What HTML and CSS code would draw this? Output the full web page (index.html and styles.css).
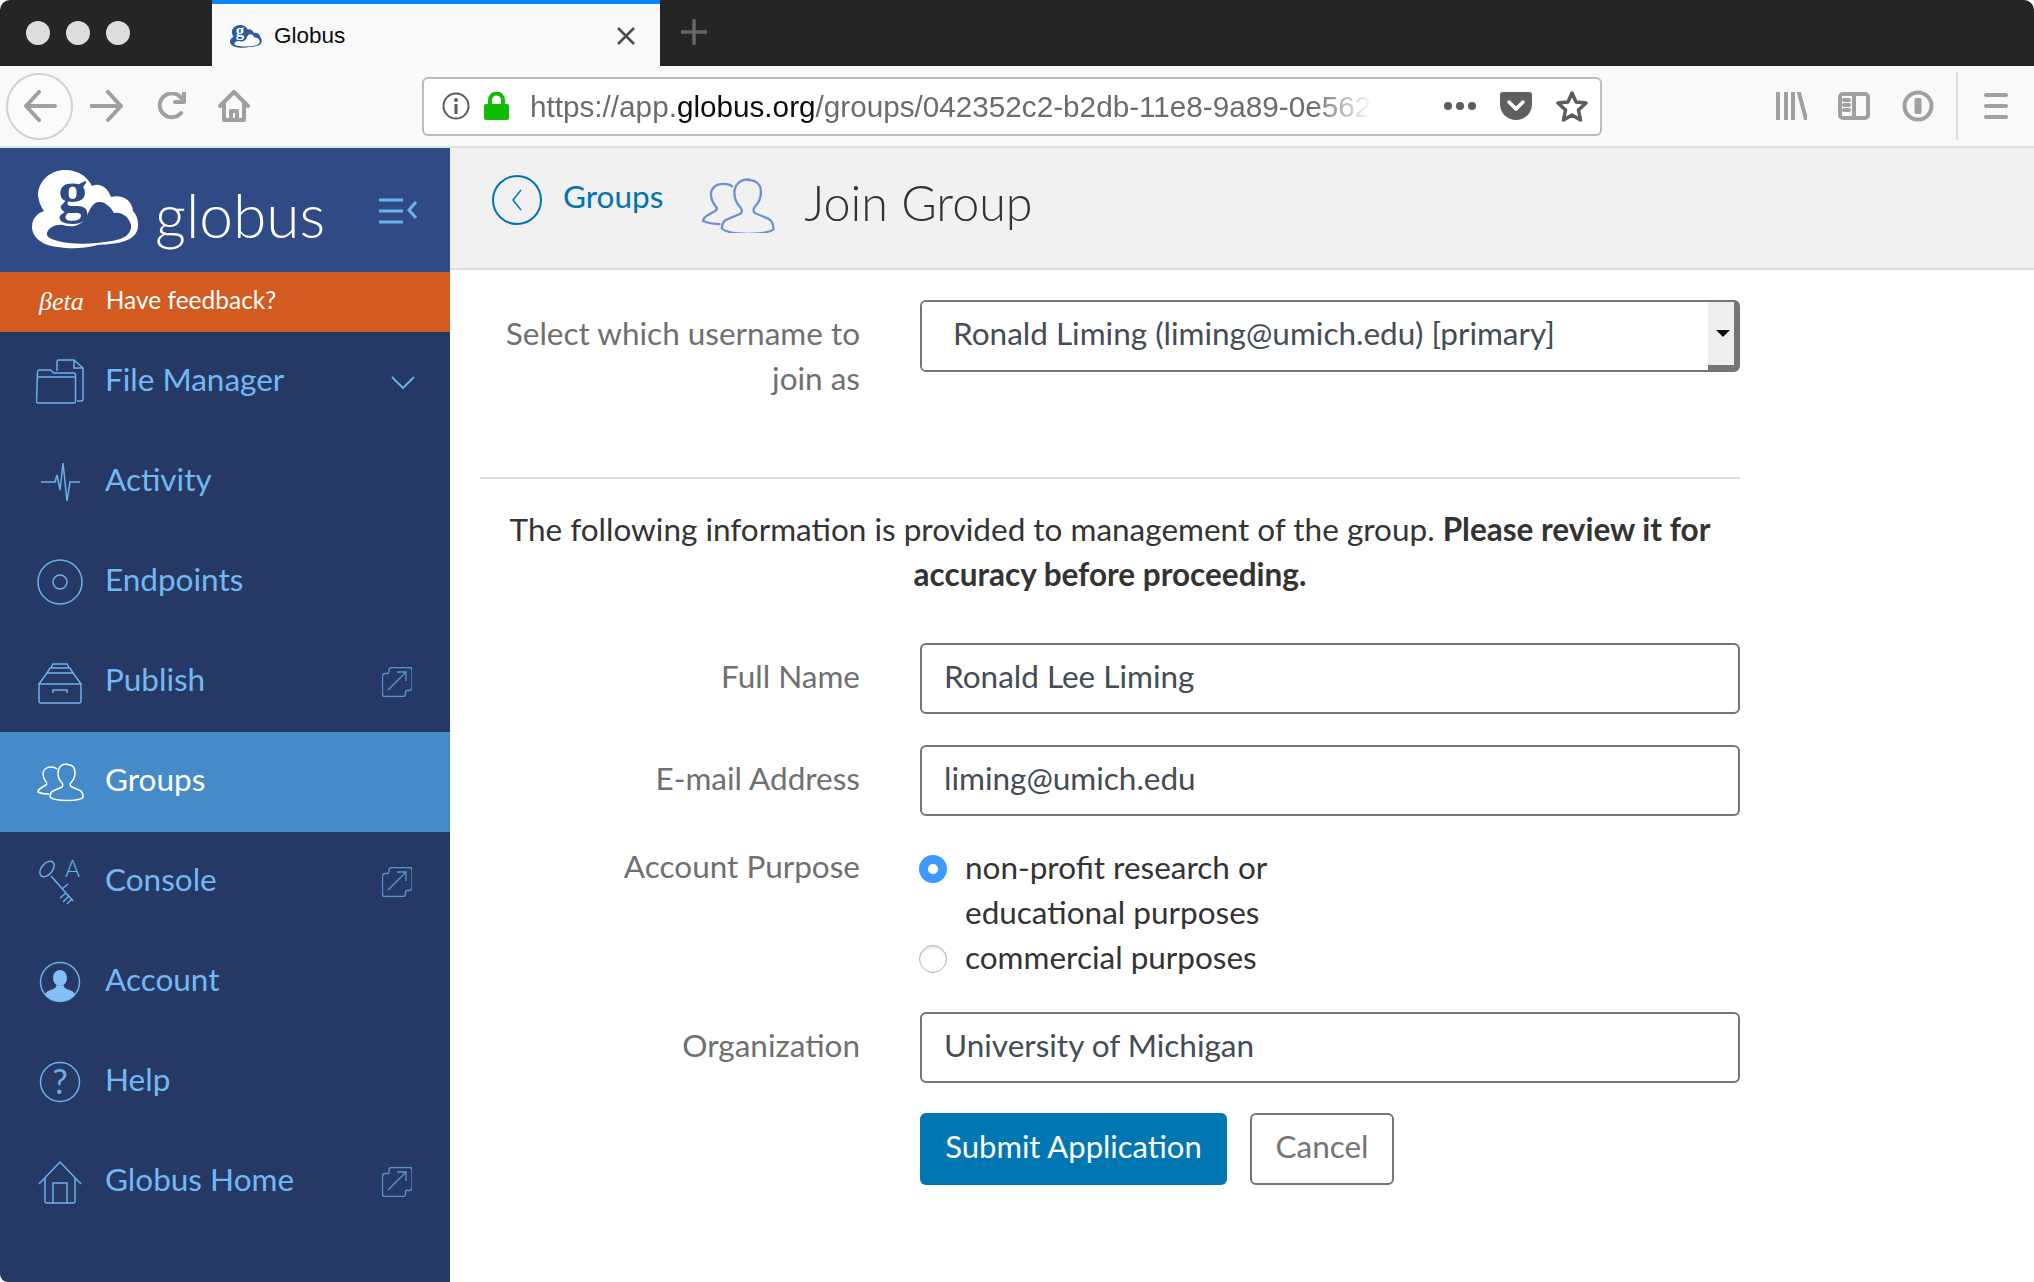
FILE: index.html
```html
<!DOCTYPE html>
<html lang="en">
<head>
    <meta charset="UTF-8">
    <title>Globus</title>
    <link rel="stylesheet" href="styles.css">
</head>
<body>
    <!-- shared icons -->
    <svg class="defs" width="0" height="0">
        <symbol id="i-folder" viewBox="0 0 48 48">
            <path d="M21 13V4a2 2 0 0 1 2-2h15l9 8v31a2 2 0 0 1-2 2h-4"/>
            <path d="M38 2v8h9"/>
            <path d="M1.5 14a2 2 0 0 1 2-2h11l3 3h20a2 2 0 0 1 2 2v26a2 2 0 0 1-2 2h-35a2 2 0 0 1-2-2z"/>
            <path d="M1.5 19h38"/>
        </symbol>
        <symbol id="i-activity" viewBox="0 0 48 48">
            <path d="M5 24h14l2-7 3 15 3-27 4 38 3-19h10"/>
        </symbol>
        <symbol id="i-endpoints" viewBox="0 0 48 48">
            <circle cx="24" cy="24" r="22"/>
            <circle cx="24" cy="24" r="7"/>
        </symbol>
        <symbol id="i-publish" viewBox="0 0 48 48">
            <path d="M3 26h42v17a2 2 0 0 1-2 2H5a2 2 0 0 1-2-2z"/>
            <path d="M3 26l8-11h26l8 11"/>
            <path d="M11 15l3-5h20l3 5"/>
            <path d="M15 10l2-4h14l2 4"/>
            <path d="M17 35v-3h14v3"/>
        </symbol>
        <symbol id="i-groups" viewBox="0 0 48 48">
            <path d="M31 6c-6 0-9 4-9 9 0 4 2 8 4 10 1 1 1 3 0 4l-9 4c-2 1-3 3-3 6 3 3 10 3.500 17 3.500s13-.5 16-3c0-3-1-6-3-7l-9-4c-1-1-1-3 0-4 2-2 4-6 4-10 0-5-3-8-8-8z"/>
            <path d="M21 11c-1.500-1.500-3.500-2-6-2-5 0-8 3-8 7 0 3 1.500 6 3 8 1 1 1 2 0 3l-5 3c-2 1-3 2-3 4 3 1.500 7 2 11 2"/>
        </symbol>
        <symbol id="i-account" viewBox="0 0 48 48">
            <circle cx="24" cy="24" r="19.500"/>
            <ellipse class="solid" cx="24" cy="20" rx="7" ry="8"/>
            <path class="solid" d="M24 43.500a19.500 19.500 0 0 1-15-7c1-3 4-4 7-5 3-1 4-2 4-4h8c0 2 1 3 4 4 3 1 6 2 7 5a19.500 19.500 0 0 1-15 7z"/>
        </symbol>
        <symbol id="i-home" viewBox="0 0 48 48">
            <path d="M3 26L24 4l21 22"/>
            <path d="M9 20v23a2 2 0 0 0 2 2h26a2 2 0 0 0 2-2V20"/>
            <path d="M17 45V25h14v20"/>
        </symbol>
        <symbol id="i-external" viewBox="0 0 30 30">
            <path d="M7 6V3a2.500 2.500 0 0 1 2.500-2.500h18A2.500 2.500 0 0 1 30 3v18a2.500 2.500 0 0 1-2.500 2.500H24"/>
            <path d="M.5 9A2.500 2.500 0 0 1 3 6.500h4M.5 9v18.500A2 2 0 0 0 2.500 29.500H21a2.500 2.500 0 0 0 2.500-2.500v-3.500"/>
            <path d="M6 23L24 5M15 5h9v9"/>
        </symbol>
    </svg>

    <div class="window">
        <div class="tabbar">
            <div class="lights">
                <span class="light"></span>
                <span class="light"></span>
                <span class="light"></span>
            </div>
            <div class="tab">
                <svg class="favicon" width="32" height="23" viewBox="0 0 107 79" preserveAspectRatio="none">
                    <path fill="#2c5a9f" d="M33 0C48 0 56 8 60 16c8-4 16 2 19 11 11-3 21 3 22 14 5 5 7 15 3 22-6 10-24 11-38 12-16 4-28 4-40 2C12 76 0 68 0 57c0-9 6-14 12-16-4-5-6-13-6-17C7 10 19 0 33 0z"/>
                    <path fill="#fff" d="M15 63c2-6 9-9 16-8 9 3 19 1 24-9 3-8 7-15 13-14 5 0 10 4 14 11 8-1 15 4 17 12 1 9-7 14-19 16-18 3-40 4-54 0-7-2-12-4-11-8z"/>
                    <text class="favicon-g" x="33" y="38">g</text>
                </svg>
                <span class="tab-title">Globus</span>
                <svg class="tab-close" width="20" height="20" viewBox="0 0 20 20"><path d="M2 2l16 16M18 2L2 18"/></svg>
            </div>
            <svg class="new-tab" width="26" height="26" viewBox="0 0 26 26"><path d="M13 0v26M0 13h26"/></svg>
        </div>

        <div class="toolbar">
            <div class="back-btn">
                <svg class="tool-icon" width="34" height="32" viewBox="0 0 34 32"><path d="M3 16h29M16 2L3 16l13 14"/></svg>
            </div>
            <svg class="tool-icon forward" width="33" height="32" viewBox="0 0 33 32"><path d="M1 16h29M18 2l13 14-13 14"/></svg>
            <svg class="tool-icon reload" width="31" height="28" viewBox="0 0 31 28"><path d="M25 21a12 12 0 1 1 1-14M28 1v9h-9"/></svg>
            <svg class="tool-icon home" width="32" height="32" viewBox="0 0 32 32"><path d="M2 16L16 2l14 14M6 14v16h20V14M13 30v-9h6v9"/></svg>

            <div class="urlbar">
                <svg class="url-info" width="28" height="28" viewBox="0 0 28 28">
                    <circle cx="14" cy="14" r="12.500"/>
                    <circle class="dot" cx="14" cy="8" r="2"/>
                    <path d="M14 12v10"/>
                </svg>
                <svg class="url-lock" width="25" height="28" viewBox="0 0 25 28">
                    <path d="M6 13V8a6.500 6.500 0 0 1 13 0v5" fill="none" stroke="#12bc00" stroke-width="4"/>
                    <rect y="12" width="25" height="16" rx="2" fill="#12bc00"/>
                </svg>
                <div class="url-text">https://app.<b>globus.org</b>/groups/042352c2-b2db-11e8-9a89-0e562</div>
                <svg class="url-dots" width="32" height="8" viewBox="0 0 32 8">
                    <circle cx="4" cy="4" r="4"/><circle cx="16" cy="4" r="4"/><circle cx="28" cy="4" r="4"/>
                </svg>
                <svg class="url-pocket" width="32" height="28" viewBox="0 0 32 28">
                    <path class="pocket-bg" d="M3 0h26a3 3 0 0 1 3 3v9c0 9-7 16-16 16S0 21 0 12V3a3 3 0 0 1 3-3z"/>
                    <path class="pocket-v" d="M9 10l7 7 7-7"/>
                </svg>
                <svg class="url-star" width="32" height="32" viewBox="0 0 32 32">
                    <path d="M16 3l4 9 10 1-7.500 7 2 10-8.500-5-8.500 5 2-10L2 13l10-1z"/>
                </svg>
            </div>

            <svg class="tool-icon library" width="31" height="28" viewBox="0 0 31 28"><path d="M2 1v26M10 1v26M17 1v26M23 1l7 26"/></svg>
            <svg class="tool-icon side" width="32" height="28" viewBox="0 0 32 28">
                <rect x="2" y="2" width="28" height="24" rx="3"/>
                <path d="M16 2v24M6 8h5M6 13h5M6 18h5"/>
            </svg>
            <svg class="tool-icon onepass" width="32" height="32" viewBox="0 0 32 32">
                <circle cx="16" cy="16" r="13.500"/>
                <rect class="onepass-key" x="12.500" y="8" width="7" height="16" rx="1.500"/>
            </svg>
            <span class="tool-sep"></span>
            <div class="hamburger"><span></span><span></span><span></span></div>
        </div>

        <div class="app">
            <aside class="sidebar">
                <div class="brand">
                    <svg class="brand-cloud" width="107" height="79" viewBox="0 0 107 79">
                        <path fill="#fff" d="M33 0C48 0 56 8 60 16c8-4 16 2 19 11 11-3 21 3 22 14 5 5 7 15 3 22-6 10-24 11-38 12-16 4-28 4-40 2C12 76 0 68 0 57c0-9 6-14 12-16-4-5-6-13-6-17C7 10 19 0 33 0z"/>
                        <path fill="#2f4a85" d="M15 63c2-6 9-9 16-8 9 3 19 1 24-9 3-8 7-15 13-14 5 0 10 4 14 11 8-1 15 4 17 12 1 9-7 14-19 16-18 3-40 4-54 0-7-2-12-4-11-8z"/>
                        <text class="brand-g" x="41" y="41">g</text>
                    </svg>
                    <span class="brand-name">globus</span>
                    <svg class="brand-toggle" width="38" height="26" viewBox="0 0 38 26">
                        <path d="M0 2h24M0 13h24M0 24h24M37 4l-7 8 7 8"/>
                    </svg>
                </div>
                <div class="beta">
                    <span class="beta-mark">βeta</span>
                    <span class="beta-text">Have feedback?</span>
                </div>
                <nav class="nav">
                    <a class="nav-item">
                        <svg class="nav-icon"><use href="#i-folder"/></svg>
                        <span class="nav-label">File Manager</span>
                        <svg class="nav-chevron" width="24" height="13" viewBox="0 0 24 13"><path d="M1 1l11 11L23 1"/></svg>
                    </a>
                    <a class="nav-item">
                        <svg class="nav-icon"><use href="#i-activity"/></svg>
                        <span class="nav-label">Activity</span>
                    </a>
                    <a class="nav-item">
                        <svg class="nav-icon"><use href="#i-endpoints"/></svg>
                        <span class="nav-label">Endpoints</span>
                    </a>
                    <a class="nav-item">
                        <svg class="nav-icon"><use href="#i-publish"/></svg>
                        <span class="nav-label">Publish</span>
                        <svg class="nav-ext"><use href="#i-external"/></svg>
                    </a>
                    <a class="nav-item active">
                        <svg class="nav-icon"><use href="#i-groups"/></svg>
                        <span class="nav-label">Groups</span>
                    </a>
                    <a class="nav-item">
                        <svg class="nav-icon" viewBox="0 0 48 48">
                            <ellipse cx="11" cy="11" rx="5.500" ry="9" transform="rotate(40 11 11)"/>
                            <path d="M15 18l22 25"/>
                            <path d="M30 35l-6 5M33 38l-6 6M36 41l-5 5M26 31l6-5"/>
                            <text class="icon-text" x="29" y="19">A</text>
                        </svg>
                        <span class="nav-label">Console</span>
                        <svg class="nav-ext"><use href="#i-external"/></svg>
                    </a>
                    <a class="nav-item">
                        <svg class="nav-icon"><use href="#i-account"/></svg>
                        <span class="nav-label">Account</span>
                    </a>
                    <a class="nav-item">
                        <svg class="nav-icon" viewBox="0 0 48 48">
                            <circle cx="24" cy="24" r="19.500"/>
                            <text class="icon-text icon-q" x="24" y="36">?</text>
                        </svg>
                        <span class="nav-label">Help</span>
                    </a>
                    <a class="nav-item">
                        <svg class="nav-icon"><use href="#i-home"/></svg>
                        <span class="nav-label">Globus Home</span>
                        <svg class="nav-ext"><use href="#i-external"/></svg>
                    </a>
                </nav>
            </aside>

            <main class="main">
                <header class="page-head">
                    <a class="back-link">
                        <span class="back-circle">
                            <svg width="12" height="24" viewBox="0 0 12 24"><path d="M10 2L2 12l8 10"/></svg>
                        </span>
                        <span class="back-text">Groups</span>
                    </a>
                    <svg class="head-icon" width="75" height="55" viewBox="0 5 48 37" preserveAspectRatio="none"><use href="#i-groups" width="48" height="48"/></svg>
                    <h1 class="page-title">Join Group</h1>
                </header>

                <form class="form">
                    <div class="row row-select">
                        <label class="row-label">Select which username to join as</label>
                        <div class="select-wrap">
                            <select class="select">
                                <option>Ronald Liming (liming@umich.edu) [primary]</option>
                            </select>
                            <span class="select-arrow"></span>
                        </div>
                    </div>

                    <hr class="divider">

                    <p class="notice">The following information is provided to management of the group. <b>Please review it for accuracy before proceeding.</b></p>

                    <div class="row">
                        <label class="row-label">Full Name</label>
                        <input class="input" type="text" value="Ronald Lee Liming">
                    </div>
                    <div class="row">
                        <label class="row-label">E-mail Address</label>
                        <input class="input" type="text" value="liming@umich.edu">
                    </div>
                    <div class="row row-tight">
                        <label class="row-label row-label-flat">Account Purpose</label>
                        <div class="radios">
                            <label class="radio-line">
                                <input class="radio" type="radio" name="purpose" checked>
                                <span class="radio-text">non-profit research or<br>educational purposes</span>
                            </label>
                            <label class="radio-line">
                                <input class="radio" type="radio" name="purpose">
                                <span class="radio-text">commercial purposes</span>
                            </label>
                        </div>
                    </div>
                    <div class="row row-tight">
                        <label class="row-label">Organization</label>
                        <input class="input" type="text" value="University of Michigan">
                    </div>
                    <div class="row">
                        <span class="row-label"></span>
                        <div class="actions">
                            <button class="btn btn-primary" type="button">Submit Application</button>
                            <button class="btn btn-plain" type="button">Cancel</button>
                        </div>
                    </div>
                </form>
            </main>
        </div>
    </div>
</body>
</html>
```
FILE: styles.css
```css
/* Base */
html, body {
    margin: 0;
    padding: 0;
    height: 100%;
    background-color: #fff;
}
body {
    font-family: Lato, "Open Sans", sans-serif;
    font-size: 31.500px;
    color: #333;
    overflow: hidden;
}
.defs {
    position: absolute;
}
svg {
    display: block;
    flex: none;
}
.window {
    height: 1282px;
    display: flex;
    flex-direction: column;
}

/* Browser tabs */
.tabbar {
    height: 66px;
    display: flex;
    background-color: #252525;
    border-radius: 10px 10px 0 0;
}
.lights {
    width: 210px;
    padding-left: 26px;
    box-sizing: border-box;
    display: flex;
    align-items: center;
    gap: 16px;
}
.light {
    width: 24px;
    height: 24px;
    border-radius: 50%;
    background-color: #dedede;
}
.tab {
    width: 448px;
    margin-left: 2px;
    box-sizing: border-box;
    display: flex;
    align-items: center;
    padding: 2px 24px 0 18px;
    background-color: #f9f9f9;
    border-top: 4px solid #0a84ff;
    font-family: "Liberation Sans", sans-serif;
    font-size: 22.500px;
    color: #0c0c0d;
}
.favicon-g {
    font-family: "Liberation Serif", serif;
    font-weight: bold;
    font-size: 56px;
    fill: #fff;
    text-anchor: middle;
}
.tab-title {
    margin-left: 12px;
    flex: 1;
}
.tab-close path {
    fill: none;
    stroke: #4a4a4f;
    stroke-width: 2.500;
}
.new-tab {
    margin: 19px 0 0 21px;
}
.new-tab path {
    fill: none;
    stroke: #666;
    stroke-width: 3.500;
}

/* Browser toolbar */
.toolbar {
    height: 80px;
    display: flex;
    align-items: center;
    background-color: #f9f9f9;
    border-bottom: 2px solid #e0e0e0;
    padding-left: 6px;
}
.tool-icon {
    fill: none;
    stroke: #a0a0a0;
    stroke-width: 4;
    stroke-linecap: round;
    stroke-linejoin: round;
}
.back-btn {
    width: 67px;
    height: 67px;
    box-sizing: border-box;
    display: flex;
    align-items: center;
    justify-content: center;
    border: 2px solid #d2d2d2;
    border-radius: 50%;
    background-color: #fbfbfb;
}
.forward { margin-left: 17px; }
.reload { margin-left: 33px; }
.home { margin-left: 31px; }
.urlbar {
    width: 1180px;
    height: 59px;
    margin-left: 172px;
    box-sizing: border-box;
    display: flex;
    align-items: center;
    padding: 0 12px 0 18px;
    background-color: #fff;
    border: 2px solid #bbb;
    border-radius: 6px;
}
.url-info {
    fill: none;
    stroke: #5c5c5c;
    stroke-width: 2;
}
.url-info .dot {
    fill: #5c5c5c;
    stroke: none;
}
.url-info path {
    stroke-width: 3;
}
.url-lock {
    margin-left: 14px;
}
.url-text {
    width: 843px;
    margin-left: 21px;
    padding-top: 2px;
    overflow: hidden;
    white-space: nowrap;
    font-family: "Liberation Sans", sans-serif;
    font-size: 29.700px;
    color: #6c6c6c;
    -webkit-mask-image: linear-gradient(to right, #000 93%, transparent);
    mask-image: linear-gradient(to right, #000 93%, transparent);
}
.url-text b {
    font-weight: normal;
    color: #0c0c0d;
}
.url-dots {
    margin-left: 72px;
    fill: #5c5c5c;
}
.url-pocket {
    margin-left: 24px;
}
.pocket-bg {
    fill: #5f5f5f;
}
.pocket-v {
    fill: none;
    stroke: #fff;
    stroke-width: 3.500;
    stroke-linecap: round;
    stroke-linejoin: round;
}
.url-star {
    margin-left: 24px;
    fill: none;
    stroke: #5c5c5c;
    stroke-width: 3.500;
    stroke-linejoin: round;
}
.library { margin-left: 174px; }
.side { margin-left: 31px; }
.onepass { margin-left: 32px; }
.onepass-key {
    fill: #a0a0a0;
    stroke: none;
}
.tool-sep {
    width: 2px;
    height: 68px;
    margin-left: 22px;
    background-color: #dcdcdc;
}
.hamburger {
    margin-left: 26px;
    width: 24px;
    display: flex;
    flex-direction: column;
    gap: 7px;
}
.hamburger span {
    height: 4px;
    border-radius: 2px;
    background-color: #a0a0a0;
}

/* App layout */
.app {
    flex: 1;
    display: flex;
    min-height: 0;
}
.sidebar {
    width: 450px;
    flex: none;
    display: flex;
    flex-direction: column;
    background-color: #263965;
    border-bottom-left-radius: 8px;
}
.brand {
    height: 124px;
    display: flex;
    align-items: flex-start;
    background-color: #2f4a85;
}
.brand-cloud {
    margin: 22px 0 0 32px;
}
.brand-name {
    margin: 32px 0 0 16px;
    font-weight: 300;
    font-size: 60.500px;
    line-height: 70px;
    color: #fff;
}
.brand-g {
    font-family: "Liberation Serif", serif;
    font-weight: bold;
    font-size: 60px;
    fill: #2f4a85;
    text-anchor: middle;
}
.brand-toggle {
    margin: 50px 0 0 54px;
    fill: none;
    stroke: #6bb3ee;
    stroke-width: 3;
}
.beta {
    height: 60px;
    display: flex;
    align-items: center;
    gap: 22px;
    padding-left: 39px;
    background-color: #d35b20;
    color: #fff;
    font-size: 24.500px;
}
.beta-mark {
    font-family: "Liberation Serif", serif;
    font-style: italic;
    font-size: 26px;
}
.beta-text {
    margin-top: -6px;
}
.nav-item {
    height: 100px;
    display: flex;
    align-items: center;
    padding: 0 38px 0 36px;
    color: #72b8f2;
}
.nav-icon {
    width: 48px;
    height: 48px;
    fill: none;
    stroke: #6cb0ea;
    stroke-width: 1.500;
}
.solid {
    fill: #84c0f5;
    stroke: none;
}
.icon-text {
    font-family: Lato, sans-serif;
    font-weight: 300;
    font-size: 23px;
    fill: #6cb0ea;
    stroke: none;
}
.icon-q {
    font-size: 34px;
    font-weight: 400;
    text-anchor: middle;
}
.nav-label {
    margin: -7px 0 0 21px;
    flex: 1;
}
.nav-chevron {
    margin-right: -3px;
    fill: none;
    stroke: #6cb0ea;
    stroke-width: 2;
}
.nav-ext {
    width: 30px;
    height: 30px;
    fill: none;
    stroke: #5d94cc;
    stroke-width: 1.300;
}
.nav-item.active {
    background-color: #468bc9;
    color: #fff;
}
.nav-item.active .nav-icon {
    stroke: #fff;
}

/* Page header */
.main {
    flex: 1;
    min-width: 0;
}
.page-head {
    height: 120px;
    display: flex;
    align-items: flex-start;
    padding-left: 42px;
    background-color: #f1f1f1;
    border-bottom: 2px solid #ddd;
}
.back-link {
    display: flex;
    align-items: center;
    gap: 21px;
    margin-top: 27px;
    color: #0073b0;
    line-height: 44px;
}
.back-text {
    margin-top: -8px;
}
.back-circle {
    width: 50px;
    height: 50px;
    box-sizing: border-box;
    display: flex;
    align-items: center;
    justify-content: center;
    border: 2px solid #0073b0;
    border-radius: 50%;
}
.back-circle svg {
    fill: none;
    stroke: #0073b0;
    stroke-width: 1.500;
}
.head-icon {
    margin: 30px 0 0 37px;
    fill: none;
    stroke: #6f8fd0;
    stroke-width: 1.500;
}
.page-title {
    margin: 26px 0 0 29px;
    font-weight: 300;
    font-size: 48.500px;
    line-height: 56px;
    color: #333;
}

/* Form */
.form {
    width: 1260px;
    margin: 30px 0 0 30px;
    line-height: 45px;
}
.row {
    display: flex;
    margin-bottom: 31px;
}
.row-tight {
    margin-bottom: 30px;
}
.row-select {
    margin-bottom: 0;
    padding-bottom: 76px;
}
.row-label {
    width: 380px;
    flex: none;
    margin-right: 60px;
    padding-top: 11px;
    text-align: right;
    color: #707070;
}
.row-label-flat {
    padding-top: 0;
    margin-top: -3px;
}
.select-wrap {
    flex: 1;
    height: 72px;
    box-sizing: border-box;
    display: flex;
    border: 2px solid #757575;
    border-right-width: 6px;
    border-radius: 6px;
    overflow: hidden;
}
.select {
    flex: 1;
    appearance: none;
    -webkit-appearance: none;
    border: 0;
    outline: 0;
    padding: 0 0 5px 31px;
    background-color: #fff;
    font: inherit;
    color: #444c56;
}
.select-arrow {
    width: 26px;
    box-sizing: border-box;
    display: flex;
    align-items: center;
    justify-content: center;
    padding-left: 4px;
    background-color: #eee;
    border-bottom: 5px solid #757575;
}
.select-arrow::after {
    content: "";
    border-left: 7px solid transparent;
    border-right: 7px solid transparent;
    border-top: 7px solid #111;
}
.divider {
    margin: 0;
    border: 0;
    border-top: 2px solid #ddd;
}
.notice {
    margin: 28px 0 46px;
    text-align: center;
}
.input {
    flex: 1;
    min-width: 0;
    height: 71px;
    box-sizing: border-box;
    border: 2px solid #757575;
    border-radius: 6px;
    padding: 0 22px 5px;
    outline: 0;
    font: inherit;
    color: #444c56;
}
.radios {
    flex: 1;
}
.radio-line {
    display: flex;
    gap: 18px;
    color: #333;
}
.radio-text {
    margin-top: -2px;
    padding-bottom: 2px;
}
.radio {
    appearance: none;
    -webkit-appearance: none;
    width: 28px;
    height: 28px;
    flex: none;
    box-sizing: border-box;
    margin: 8px 0 0 -1px;
    border: 1px solid #b5b5b5;
    border-radius: 50%;
    background-color: #fff;
    box-shadow: inset 0 2px 2px #e6e6e6;
}
.radio:checked {
    border: 0;
    box-shadow: none;
    background: radial-gradient(circle, #fff 0, #fff 4.500px, #3d98ff 5.500px);
}
.actions {
    display: flex;
    gap: 23px;
}
.btn {
    height: 72px;
    box-sizing: border-box;
    border-radius: 6px;
    padding: 0 0 6px;
    font: inherit;
}
.btn-primary {
    width: 307px;
    border: 0;
    background-color: #0077b3;
    color: #fff;
    font-size: 31px;
}
.btn-plain {
    width: 144px;
    border: 2px solid #757575;
    background-color: #fff;
    color: #757575;
}
```
